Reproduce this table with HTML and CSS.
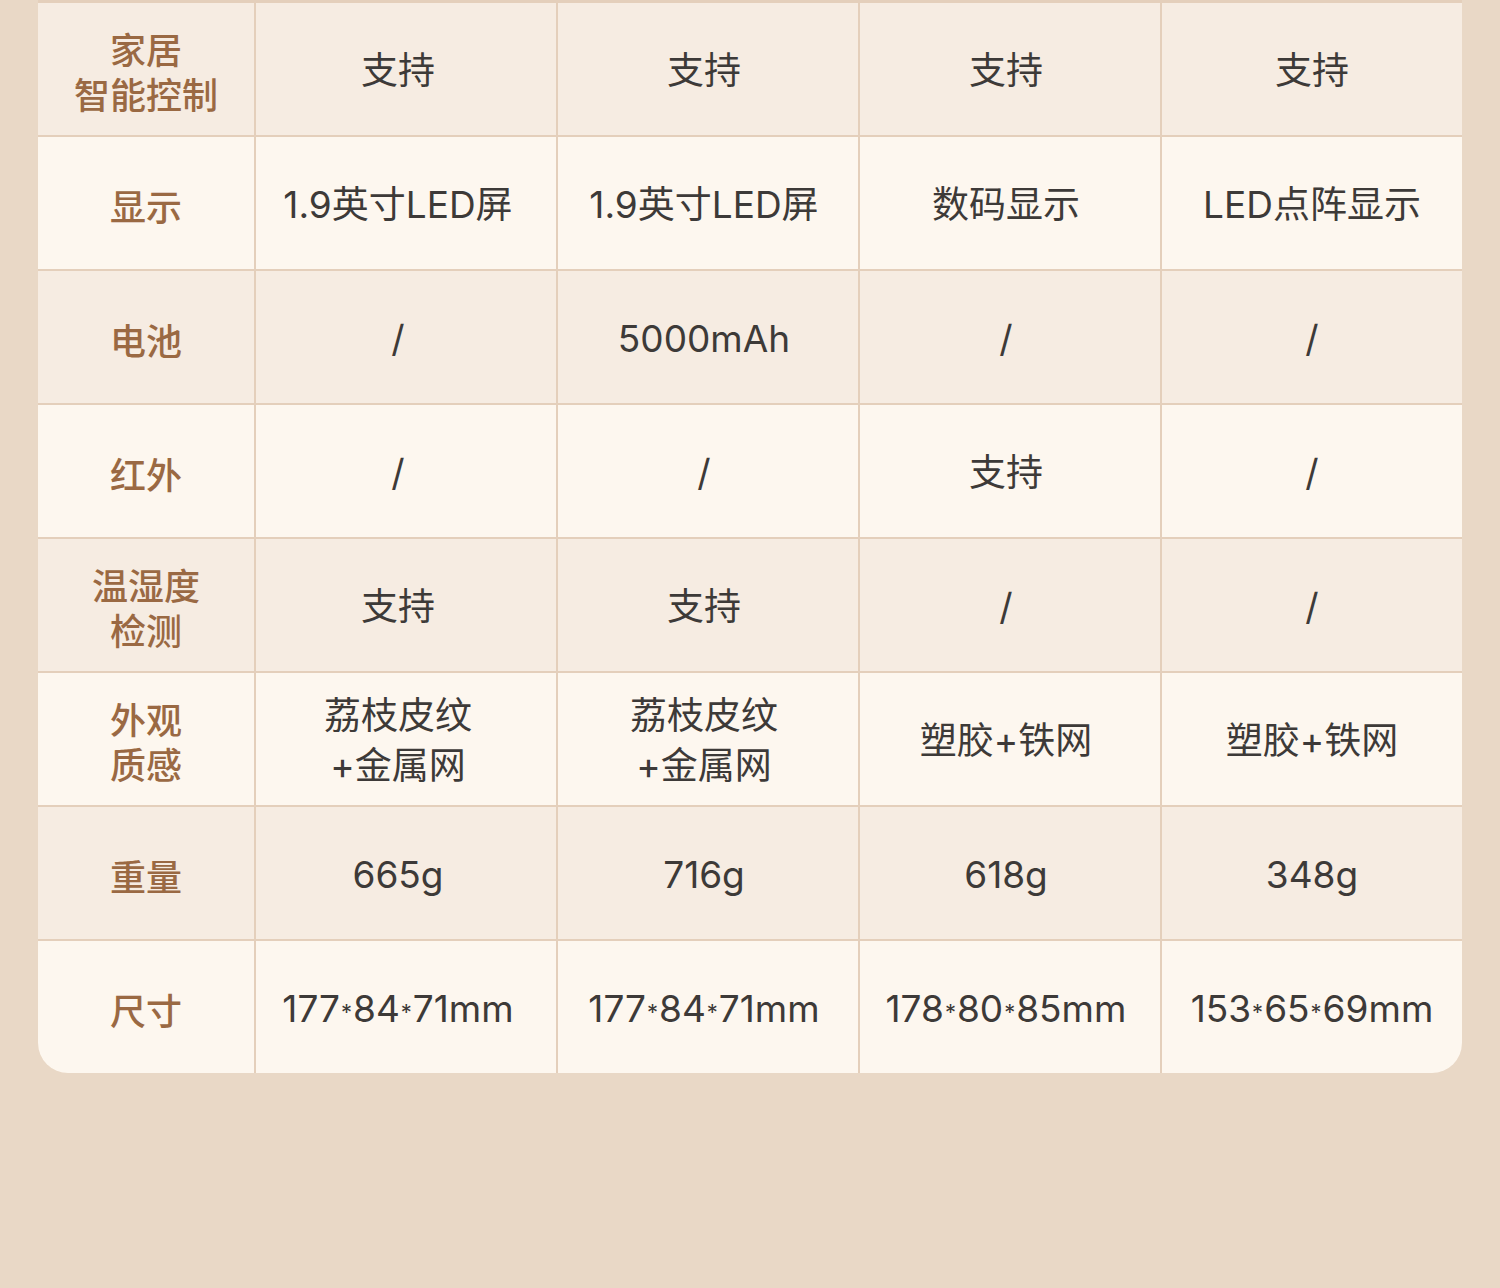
FILE: index.html
```html
<!DOCTYPE html>
<html lang="zh-CN">
<head>
<meta charset="utf-8">
<title>参数对比</title>
<link rel="stylesheet" href="styles.css">
</head>
<body>
<div class="page">
  <div class="table">
    <div class="cell label dark">家居<br>智能控制</div>
    <div class="cell dark">支持</div>
    <div class="cell dark">支持</div>
    <div class="cell dark">支持</div>
    <div class="cell dark">支持</div>

    <div class="cell label">显示</div>
    <div class="cell">1.9英寸LED屏</div>
    <div class="cell">1.9英寸LED屏</div>
    <div class="cell">数码显示</div>
    <div class="cell">LED点阵显示</div>

    <div class="cell label dark">电池</div>
    <div class="cell dark">/</div>
    <div class="cell dark">5000mAh</div>
    <div class="cell dark">/</div>
    <div class="cell dark">/</div>

    <div class="cell label">红外</div>
    <div class="cell">/</div>
    <div class="cell">/</div>
    <div class="cell">支持</div>
    <div class="cell">/</div>

    <div class="cell label dark">温湿度<br>检测</div>
    <div class="cell dark">支持</div>
    <div class="cell dark">支持</div>
    <div class="cell dark">/</div>
    <div class="cell dark">/</div>

    <div class="cell label">外观<br>质感</div>
    <div class="cell">荔枝皮纹<br>+金属网</div>
    <div class="cell">荔枝皮纹<br>+金属网</div>
    <div class="cell">塑胶+铁网</div>
    <div class="cell">塑胶+铁网</div>

    <div class="cell label dark">重量</div>
    <div class="cell dark">665g</div>
    <div class="cell dark">716g</div>
    <div class="cell dark">618g</div>
    <div class="cell dark">348g</div>

    <div class="cell label">尺寸</div>
    <div class="cell">177<span class="star">*</span>84<span class="star">*</span>71mm</div>
    <div class="cell">177<span class="star">*</span>84<span class="star">*</span>71mm</div>
    <div class="cell">178<span class="star">*</span>80<span class="star">*</span>85mm</div>
    <div class="cell">153<span class="star">*</span>65<span class="star">*</span>69mm</div>
  </div>
</div>
</body>
</html>
```

FILE: styles.css
```css
html, body {
  margin: 0;
  padding: 0;
  background: #e9d8c6;
}

.page {
  width: 1500px;
  height: 1288px;
  padding: 0 38px;
  box-sizing: border-box;
}

.table {
  display: grid;
  grid-template-columns: 216px 300px 300px 300px 300px;
  grid-auto-rows: 132px;
  column-gap: 2px;
  row-gap: 2px;
  padding-top: 3px;
  background: #e4cfbb;
  border-radius: 0 0 30px 30px;
  overflow: hidden;
  width: 1424px;
}

.cell {
  display: flex;
  align-items: center;
  justify-content: center;
  text-align: center;
  background: #fdf7ef;
  font-family: Inter, "Noto Sans CJK SC", sans-serif;
  font-size: 37px;
  line-height: 50px;
  color: #3d3a38;
  padding-top: 4px;
  box-sizing: border-box;
}

.cell:nth-child(5n+2) {
  padding-right: 16px;
}

.cell:nth-child(5n+3),
.cell:nth-child(5n+4) {
  padding-right: 8px;
}

.cell.dark {
  background: #f6ece2;
}

.cell.label {
  font-family: "Noto Sans CJK SC", sans-serif;
  color: #9a6943;
  font-size: 36px;
  line-height: 45px;
  font-weight: 500;
}

.star {
  display: inline-block;
  font-size: 22px;
  line-height: 1;
  transform: translateY(3px);
  padding: 0 1px;
}
```
